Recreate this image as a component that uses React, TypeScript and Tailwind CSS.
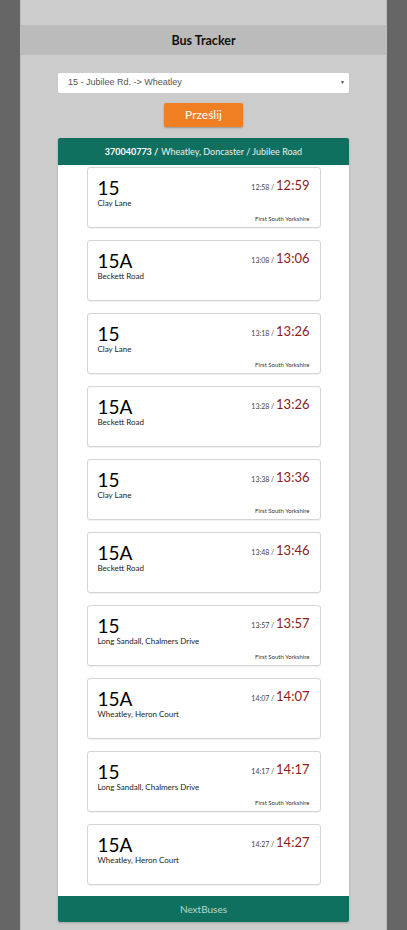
const departures = [
  { route: "15", dest: "Clay Lane", sched: "12:58", live: "12:59", op: "First South Yorkshire" },
  { route: "15A", dest: "Beckett Road", sched: "13:08", live: "13:06", op: "" },
  { route: "15", dest: "Clay Lane", sched: "13:18", live: "13:26", op: "First South Yorkshire" },
  { route: "15A", dest: "Beckett Road", sched: "13:28", live: "13:26", op: "" },
  { route: "15", dest: "Clay Lane", sched: "13:38", live: "13:36", op: "First South Yorkshire" },
  { route: "15A", dest: "Beckett Road", sched: "13:48", live: "13:46", op: "" },
  { route: "15", dest: "Long Sandall, Chalmers Drive", sched: "13:57", live: "13:57", op: "First South Yorkshire" },
  { route: "15A", dest: "Wheatley, Heron Court", sched: "14:07", live: "14:07", op: "" },
  { route: "15", dest: "Long Sandall, Chalmers Drive", sched: "14:17", live: "14:17", op: "First South Yorkshire" },
  { route: "15A", dest: "Wheatley, Heron Court", sched: "14:27", live: "14:27", op: "" },
];

export default function App() {
  return (
    <div className="min-h-[930px] bg-[#666666] font-['Lato','Noto_Sans',sans-serif]">
      <div className="mx-[20px] w-[367px] min-h-[930px] bg-[#cccccc] border-x border-[#bdbdbd] pt-[25px]">
        {/* Header */}
        <div className="h-[30px] bg-[#bbbbbb] flex items-center justify-center pt-[2px]">
          <h1 className="text-[12.5px] font-bold text-[#111]">Bus Tracker</h1>
        </div>

        {/* Form */}
        <div className="px-[37px] pt-[18px] flex flex-col items-center">
          <div className="w-full h-[20px] bg-white rounded-[2px] flex items-center justify-between pl-[10px] pr-[4px] font-['Liberation_Sans',Arial,sans-serif] text-[9px] text-[#555]">
            <span>15 - Jubilee Rd. -&gt; Wheatley</span>
            <span className="text-[5px] text-[#444]">▼</span>
          </div>
          <button className="mt-[10px] w-[79px] h-[24px] bg-[#ef7f22] rounded-[2px] shadow-[0_1px_2px_rgba(0,0,0,0.25)] text-white text-[12px] flex items-center justify-center">
            Prześlij
          </button>
        </div>

        {/* Panel */}
        <div className="mx-[37px] mt-[11px] shadow-[0_1px_2px_rgba(0,0,0,0.2)]">
          <div className="h-[27px] bg-[#10705f] rounded-t-[2px] flex items-center justify-center text-[9px] text-[#e8f0ee]">
            <span className="font-bold text-white">370040773 /</span>
            <span className="ml-[3px]">Wheatley, Doncaster / Jubilee Road</span>
          </div>
          <div className="bg-white pt-[2px] pb-[11px] flex flex-col gap-[12px] items-center">
            {departures.map((d, i) => (
              <div
                key={i}
                className="w-[234px] h-[61px] border border-[#d4d4d4] rounded-[3px] shadow-[0_1px_1px_rgba(0,0,0,0.06)] px-[10px] pt-[11px] pb-[4px] flex flex-col"
              >
                <div className="flex justify-between items-start">
                  <div className="text-[19px] leading-[18px] text-black">{d.route}</div>
                  <div className="text-[#444] -mt-[7px]">
                    <span className="text-[7px]">{d.sched} / </span>
                    <span className="text-[13px] text-[#8a1c1c]">{d.live}</span>
                  </div>
                </div>
                <div className="text-[8px] text-[#222]">{d.dest}</div>
                <div className="mt-auto text-right text-[6px] text-[#333]">{d.op}</div>
              </div>
            ))}
          </div>
          <div className="h-[26px] bg-[#10705f] rounded-b-[2px] flex items-center justify-center text-[10px] text-[#b8d8d0]">
            NextBuses
          </div>
        </div>
      </div>
    </div>
  );
}
